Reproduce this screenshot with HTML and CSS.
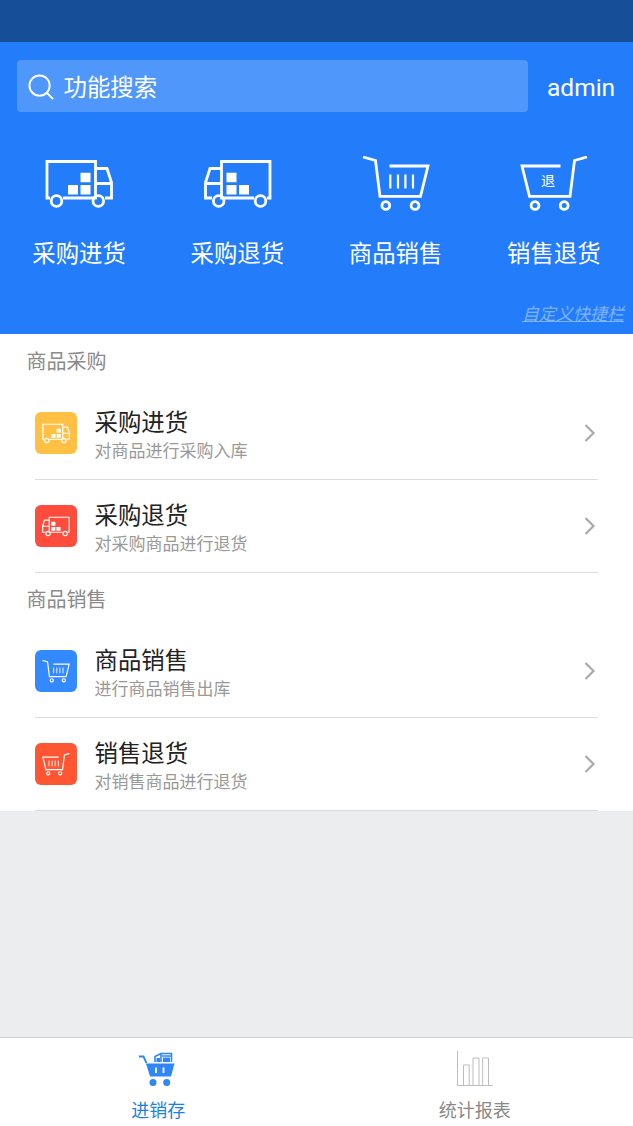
FILE: index.html
```html
<!DOCTYPE html>
<html lang="zh-CN">
<head>
<meta charset="utf-8">
<title>进销存</title>
<link rel="stylesheet" href="styles.css">
</head>
<body>
<svg class="defs" width="0" height="0" aria-hidden="true">
  <symbol id="truck" viewBox="0 0 68 56">
    <path d="M5 42H2V5.500H50.500V42H18M38 42H50.500M50.500 12.500H62L66.500 26.500V42H60M50.500 27.500H66.500" fill="none" stroke="currentColor" stroke-width="2.800"/>
    <circle cx="11.500" cy="45" r="5.300" fill="none" stroke="currentColor" stroke-width="2.800"/>
    <circle cx="53.300" cy="45" r="5.300" fill="none" stroke="currentColor" stroke-width="2.800"/>
    <path d="M23 29h10v9.500H23zM35.500 29h10v9.500h-10zM35.500 16.700h10v9.500h-10z" fill="currentColor"/>
  </symbol>
  <symbol id="truck-back" viewBox="0 0 68 56">
    <g transform="matrix(-1 0 0 1 68 0)"><use href="#truck" width="68" height="56"/></g>
  </symbol>
  <symbol id="cart-frame" viewBox="0 0 68 56">
    <path d="M1 1L13.500 4.500L18 40.300H58.500L66 10H27.500" fill="none" stroke="currentColor" stroke-width="2.800"/>
    <circle cx="23.800" cy="49.500" r="3.900" fill="none" stroke="currentColor" stroke-width="2.800"/>
    <circle cx="53" cy="49.500" r="3.900" fill="none" stroke="currentColor" stroke-width="2.800"/>
  </symbol>
  <symbol id="cart" viewBox="0 0 68 56">
    <use href="#cart-frame" width="68" height="56"/>
    <path d="M28.300 18.500V32.500M36 18.500V32.500M43.400 18.500V32.500M51 18.500V32.500" fill="none" stroke="currentColor" stroke-width="2.200"/>
  </symbol>
  <symbol id="cart-back" viewBox="0 0 68 56">
    <g transform="matrix(-1 0 0 1 68 0)"><use href="#cart" width="68" height="56"/></g>
  </symbol>
  <symbol id="chevron" viewBox="0 0 12 20">
    <path d="M1.500 2L9.500 10L1.500 18" fill="none" stroke="currentColor" stroke-width="2.200"/>
  </symbol>
</svg>

<div class="status"></div>

<header class="hero">
  <div class="search-row">
    <div class="search">
      <svg class="search-icon" viewBox="0 0 28 28"><circle cx="12" cy="12" r="10.500" fill="none" stroke="#fff" stroke-width="2"/><path d="M19.500 19.500L26 26" stroke="#fff" stroke-width="2" fill="none"/></svg>
      <span>功能搜索</span>
    </div>
    <span class="user">admin</span>
  </div>
  <nav class="quick">
    <a class="quick-item">
      <svg class="quick-icon"><use href="#truck"/></svg>
      <span>采购进货</span>
    </a>
    <a class="quick-item">
      <svg class="quick-icon quick-icon-back"><use href="#truck-back"/></svg>
      <span>采购退货</span>
    </a>
    <a class="quick-item">
      <svg class="quick-icon"><use href="#cart"/></svg>
      <span>商品销售</span>
    </a>
    <a class="quick-item">
      <svg class="quick-icon" viewBox="0 0 68 56">
        <g transform="matrix(-1 0 0 1 68 0)"><use href="#cart-frame" width="68" height="56"/></g>
        <text class="cart-char" x="28" y="30">退</text>
      </svg>
      <span>销售退货</span>
    </a>
  </nav>
  <div class="customize"><a>自定义快捷栏</a></div>
</header>

<main class="menu">
  <h2 class="menu-heading first">商品采购</h2>
  <div class="row">
    <div class="badge badge-yellow"><svg class="badge-icon"><use href="#truck"/></svg></div>
    <div class="row-text"><div class="row-title">采购进货</div><div class="row-sub">对商品进行采购入库</div></div>
    <svg class="chevron"><use href="#chevron"/></svg>
  </div>
  <div class="row">
    <div class="badge badge-red"><svg class="badge-icon"><use href="#truck-back"/></svg></div>
    <div class="row-text"><div class="row-title">采购退货</div><div class="row-sub">对采购商品进行退货</div></div>
    <svg class="chevron"><use href="#chevron"/></svg>
  </div>
  <h2 class="menu-heading">商品销售</h2>
  <div class="row">
    <div class="badge badge-blue"><svg class="badge-icon"><use href="#cart"/></svg></div>
    <div class="row-text"><div class="row-title">商品销售</div><div class="row-sub">进行商品销售出库</div></div>
    <svg class="chevron"><use href="#chevron"/></svg>
  </div>
  <div class="row">
    <div class="badge badge-orange"><svg class="badge-icon"><use href="#cart-back"/></svg></div>
    <div class="row-text"><div class="row-title">销售退货</div><div class="row-sub">对销售商品进行退货</div></div>
    <svg class="chevron"><use href="#chevron"/></svg>
  </div>
</main>

<div class="spacer"></div>

<footer class="tabs">
  <a class="tab tab-active">
    <svg class="tab-icon" viewBox="0 0 40 36">
      <path d="M1 5.500H5.500L8.500 12" fill="none" stroke="#2f86f6" stroke-width="1.800"/>
      <path d="M8 12.500H36.500L33 25.500H12z" fill="#2f86f6"/>
      <path d="M18 16.500V22M25.500 16.500V22" stroke="#fff" stroke-width="1.800" fill="none"/>
      <path d="M17 11V5.500L23 2.500H33.500V11M23 2.500V11M24 5H33" fill="none" stroke="#2f86f6" stroke-width="1.600"/>
      <path d="M18.500 7h3.500v4h-3.500zM25 6.500h7v4.500h-7z" fill="#2f86f6"/>
      <circle cx="15" cy="31.500" r="3.500" fill="#2f86f6"/>
      <circle cx="28.700" cy="31.500" r="3.500" fill="#2f86f6"/>
    </svg>
    <span>进销存</span>
  </a>
  <a class="tab">
    <svg class="tab-icon" viewBox="0 0 40 36">
      <path d="M2.500 0V34.500H37.500M8.500 34.500V14H14.200V34.500M18 34.500V7H24V34.500M27.700 34.500V7H33.500V34.500" fill="none" stroke="#bdbdbd" stroke-width="1"/>
    </svg>
    <span>统计报表</span>
  </a>
</footer>
</body>
</html>
```

FILE: styles.css
```css
* {
  box-sizing: border-box;
}

html,
body {
  margin: 0;
  padding: 0;
}

body {
  width: 633px;
  height: 1126px;
  display: flex;
  flex-direction: column;
  overflow: hidden;
  background: #ecedef;
  font-family: "Noto Sans CJK SC", "Noto Sans", sans-serif;
}

.defs {
  position: absolute;
}

.status {
  height: 42px;
  flex: none;
  background: #164f98;
}

.hero {
  height: 292px;
  flex: none;
  background: #237dfb;
  color: #fff;
  display: flex;
  flex-direction: column;
}

.search-row {
  display: flex;
  align-items: center;
  padding: 18px 0 0 17px;
}

.search {
  width: 511px;
  flex: none;
  height: 52px;
  display: flex;
  align-items: center;
  gap: 9px;
  padding-left: 10.500px;
  border-radius: 4px;
  background: rgba(255, 255, 255, 0.2);
  font-size: 23.400px;
}

.search-icon {
  width: 27px;
  height: 27px;
  margin-top: 2px;
}

.user {
  margin: 2px 0 0 19px;
  font-family: Roboto, sans-serif;
  font-size: 24.500px;
}

.quick {
  display: grid;
  grid-template-columns: repeat(4, 1fr);
  margin-top: 44px;
}

.quick-item {
  display: flex;
  flex-direction: column;
  align-items: center;
  font-size: 23.400px;
  line-height: 34px;
  gap: 23px;
}

.quick-icon {
  width: 68px;
  height: 56px;
  color: #fff;
}

.quick-icon-back {
  transform: translateX(1px);
}

.cart-char {
  fill: #fff;
  font-size: 14px;
  text-anchor: middle;
  font-family: "Noto Sans CJK SC", sans-serif;
}

.customize {
  margin-top: auto;
  padding: 0 9px 8px 0;
  text-align: right;
  font-size: 17px;
  line-height: 26px;
  font-style: italic;
  color: rgba(255, 255, 255, 0.42);
  text-decoration: underline;
}

.menu {
  background: #fff;
  flex: none;
}

.menu-heading {
  margin: 0;
  height: 52px;
  padding-left: 26.500px;
  font-size: 20px;
  font-weight: 400;
  line-height: 52px;
  color: #8a8a8a;
}

.menu-heading.first {
  height: 53px;
  line-height: 54px;
}

.row {
  height: 93px;
  margin: 0 35px;
  display: flex;
  align-items: center;
  gap: 18px;
  border-bottom: 1px solid #dcdcdc;
}

.badge {
  width: 42px;
  height: 42px;
  flex: none;
  border-radius: 6px;
  display: flex;
  align-items: center;
  justify-content: center;
  color: #fff;
}

.badge-yellow {
  background: #ffc043;
}

.badge-red {
  background: #ff4c3c;
}

.badge-blue {
  background: #3389ff;
}

.badge-orange {
  background: #ff5533;
}

.badge-icon {
  width: 28px;
  height: 23px;
}

.row-text {
  flex: 1;
  padding-top: 4px;
  margin-left: -0.500px;
}

.row-title {
  font-size: 23.400px;
  line-height: 30px;
  color: #222;
}

.row-sub {
  font-size: 17px;
  line-height: 28px;
  color: #999;
}

.chevron {
  width: 12px;
  height: 20px;
  margin-right: 2px;
  color: #aaa;
}

.spacer {
  flex: 1;
}

.tabs {
  height: 89px;
  flex: none;
  display: grid;
  grid-template-columns: repeat(2, 1fr);
  background: #fff;
  border-top: 1px solid #cfcfcf;
}

.tab {
  display: flex;
  flex-direction: column;
  align-items: center;
  padding-top: 13px;
  font-size: 18px;
  line-height: 26px;
  color: #888;
}

.tab-active {
  color: #1e80e0;
}

.tab-icon {
  width: 40px;
  height: 36px;
  margin-bottom: 9px;
}
```
